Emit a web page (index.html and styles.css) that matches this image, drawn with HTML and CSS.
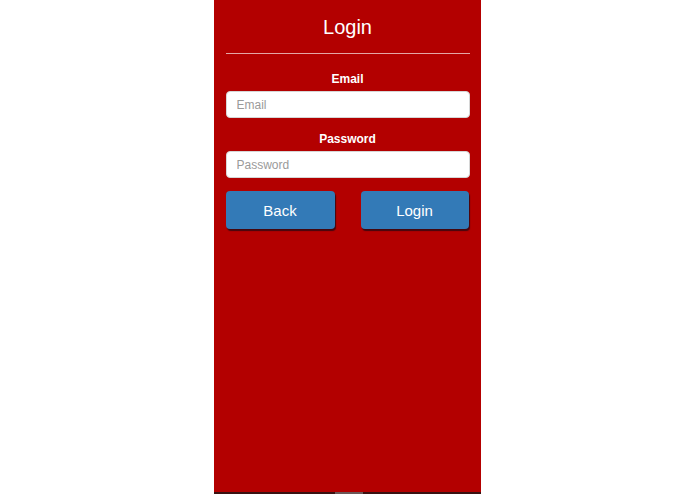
FILE: index.html
```html
<!DOCTYPE html>
<html lang="en">
<head>
<meta charset="utf-8">
<title>Login</title>
<link rel="stylesheet" href="styles.css">
</head>
<body>
<div class="page">
  <div class="panel">
    <div class="content">
      <h1 class="title">Login</h1>
      <hr class="divider">
      <form class="form">
        <label class="label" for="email">Email</label>
        <input class="input" id="email" type="text" placeholder="Email">
        <label class="label label-pw" for="password">Password</label>
        <input class="input" id="password" type="password" placeholder="Password">
        <div class="actions">
          <button type="button" class="btn btn-back">Back</button>
          <button type="button" class="btn btn-login">Login</button>
        </div>
      </form>
    </div>
    <div class="bottom-bar"><span class="handle"></span></div>
  </div>
</div>
</body>
</html>
```
FILE: styles.css
```css
html, body {
  margin: 0;
  padding: 0;
  height: 100%;
  background: #ffffff;
  font-family: "Liberation Sans", Arial, sans-serif;
}

.page {
  display: flex;
  justify-content: center;
  height: 100%;
}

.panel {
  width: 267px;
  margin-left: -1px;
  background: #b30000;
  display: flex;
  flex-direction: column;
  height: 494px;
}

.content {
  padding: 0 11px 0 12px;
  display: flex;
  flex-direction: column;
}

.title {
  margin: 15px 0 0;
  font-size: 20px;
  line-height: 24px;
  font-weight: normal;
  color: #ffffff;
  text-align: center;
}

.divider {
  margin: 14px 0 0;
  border: 0;
  height: 1px;
  background: rgba(255, 255, 255, 0.65);
}

.form {
  display: flex;
  flex-direction: column;
  margin-top: 18px;
}

.label {
  font-size: 12px;
  line-height: 14px;
  font-weight: bold;
  color: #ffffff;
  text-align: center;
}

.label-pw {
  margin-top: 14px;
}

.input {
  margin-top: 5px;
  box-sizing: border-box;
  height: 27px;
  width: 100%;
  border: 1px solid #d6d6d6;
  border-radius: 4px;
  background: #ffffff;
  padding: 0 10px;
  font-family: "Liberation Sans", Arial, sans-serif;
  font-size: 12px;
  color: #333333;
  outline: none;
}

.input::placeholder {
  color: #9a9a9a;
}

.actions {
  margin-top: 13px;
  display: flex;
  justify-content: space-between;
  padding-right: 1px;
}

.btn {
  height: 38px;
  box-sizing: border-box;
  border: 0;
  border-radius: 4px;
  background: #337ab7;
  color: #ffffff;
  font-family: "Liberation Sans", Arial, sans-serif;
  font-size: 15px;
  box-shadow: 1px 2px 1px rgba(30, 10, 20, 0.75);
  padding: 0;
}

.btn-back {
  width: 109px;
}

.btn-login {
  width: 108px;
}

.bottom-bar {
  margin-top: auto;
  height: 2px;
  background: #3a1212;
  display: flex;
}

.handle {
  margin-left: 121px;
  width: 28px;
  height: 2px;
  background: #6b5757;
}
```
